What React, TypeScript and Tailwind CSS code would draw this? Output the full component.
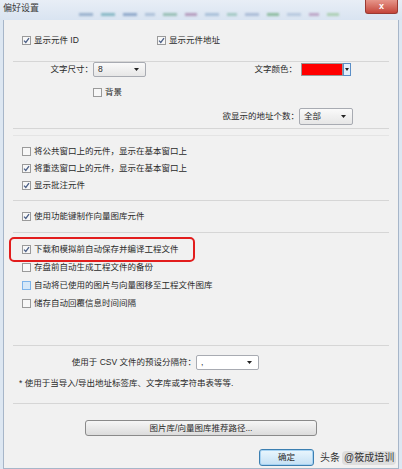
import React from 'react';

const font = "font-['Liberation_Sans','Noto_Sans_CJK_SC',sans-serif]";

// small win7 style checkbox
const Check = ({ checked = false, hot = false }: { checked?: boolean; hot?: boolean }) => (
  <span
    className={`flex h-[9px] w-[9px] shrink-0 items-center justify-center border ${
      hot ? 'border-[#7eb4ea] bg-[#d6e8f8]' : 'border-[#9a9a9a] bg-[#f7f7f7]'
    }`}
  >
    {checked && (
      <svg width="7" height="7" viewBox="0 0 7 7">
        <path d="M1 3.6 L2.8 5.4 L6 1.2" fill="none" stroke="#4b5f86" strokeWidth="1.3" />
      </svg>
    )}
  </span>
);

const CheckRow = ({ label, checked, hot, h }: { label: string; checked?: boolean; hot?: boolean; h: string }) => (
  <div className={`flex ${h} items-center gap-[3px] pl-[18px]`}>
    <Check checked={checked} hot={hot} />
    <span>{label}</span>
  </div>
);

const Arrow = () => (
  <svg width="5" height="3" viewBox="0 0 5 3">
    <path d="M0 0 H5 L2.5 3 Z" fill="#222" />
  </svg>
);

const Select = ({ value, w, flat }: { value: string; w: string; flat?: boolean }) => (
  <div
    className={`flex h-full ${w} items-center justify-between rounded-[2px] border border-[#a8abb2] pl-[4px] pr-[6px] ${
      flat ? 'bg-white' : 'bg-gradient-to-b from-[#fafafa] to-[#e6e6e6]'
    }`}
  >
    <span>{value}</span>
    <Arrow />
  </div>
);

const Sep = ({ mt, faint }: { mt: string; faint?: boolean }) => (
  <div className={`${mt} mx-[9px] h-px ${faint ? 'bg-[#e4e4e4]' : 'bg-[#d6d6d6]'}`} />
);

export default function App() {
  return (
    <div className={`${font} flex h-[469px] w-[402px] flex-col overflow-hidden bg-[#dde7f2] text-[8.5px] leading-none text-[#2a2a2a]`}>
      {/* title bar */}
      <div className="relative flex h-[20px] shrink-0 items-start bg-gradient-to-b from-[#e8eef6] to-[#d9e4f1]">
        <span className="pl-[3px] pt-[4px] text-[9px] text-[#3a3a3a]">偏好设置</span>
        <div className="ml-[40px] mt-[13px] flex gap-[8px] opacity-60 blur-[1px]">
          <span className="h-[3px] w-[14px] bg-[#6d8fb5]" />
          <span className="h-[3px] w-[14px] bg-[#4f9aa8]" />
          <span className="h-[3px] w-[14px] bg-[#5b7fb0]" />
          <span className="h-[3px] w-[10px] bg-[#8fa9c9]" />
          <span className="h-[3px] w-[14px] bg-[#6aa58c]" />
          <span className="h-[3px] w-[12px] bg-[#9a6a9a]" />
          <span className="h-[3px] w-[14px] bg-[#87a7c8]" />
          <span className="h-[3px] w-[10px] bg-[#7db5a5]" />
          <span className="h-[3px] w-[14px] bg-[#8aa0c5]" />
          <span className="h-[3px] w-[12px] bg-[#5aa06a]" />
          <span className="h-[3px] w-[14px] bg-[#9fb5d2]" />
          <span className="h-[3px] w-[10px] bg-[#a87aaa]" />
          <span className="h-[3px] w-[12px] bg-[#8cc08a]" />
        </div>
        <div className="absolute right-[4px] top-0 flex h-[14px] w-[33px] items-center justify-center rounded-b-[3px] border border-t-0 border-[#9a3a32] bg-gradient-to-b from-[#e6958a] to-[#c4443a]">
          <span className="text-[9px] font-bold text-white">x</span>
        </div>
      </div>

      {/* window body */}
      <div className="mx-[3px] flex flex-1 flex-col border-x border-b border-[#a7b6c9] bg-[#f1f1f1]">
        <div className="flex h-[41px] items-center pl-[18px]">
          <div className="flex w-[135px] items-center gap-[3px]">
            <Check checked />
            <span>显示元件 ID</span>
          </div>
          <div className="flex items-center gap-[3px]">
            <Check checked />
            <span>显示元件地址</span>
          </div>
        </div>
        <Sep mt="mt-0" />

        <div className="flex h-[15px] items-center">
          <span className="w-[89px] text-right">文字尺寸：</span>
          <Select value="8" w="w-[53px]" />
          <span className="ml-auto">文字颜色：</span>
          <div className="ml-[4px] flex h-[13px] items-center">
            <div className="h-full w-[42px] border border-[#9a9a9a] bg-[#ff0000]" />
            <div className="flex h-full w-[8px] items-center justify-center border border-[#5b8fc7] bg-[#e3eefa]">
              <svg width="4" height="3" viewBox="0 0 4 3">
                <path d="M0 0 H4 L2 3 Z" fill="#222" />
              </svg>
            </div>
          </div>
          <div className="w-[47px]" />
        </div>
        <div className="mt-[8px] flex h-[14px] items-center gap-[3px] pl-[89px]">
          <Check />
          <span>背景</span>
        </div>
        <div className="mt-[9px] flex h-[17px] items-center justify-end pr-[45px]">
          <span>欲显示的地址个数：</span>
          <Select value="全部" w="w-[54px]" />
        </div>
        <Sep mt="mt-[3px]" />

        <div className="flex flex-1 flex-col">
          <Sep mt="mt-[6px]" faint />
          <div className="mt-[7px]" />
          <CheckRow h="h-[17px]" label="将公共窗口上的元件，显示在基本窗口上" />
          <CheckRow h="h-[17px]" label="将重迭窗口上的元件，显示在基本窗口上" checked />
          <CheckRow h="h-[17px]" label="显示批注元件" checked />
          <Sep mt="mt-[6px]" />
          <div className="mt-[7px]" />
          <CheckRow h="h-[17px]" label="使用功能键制作向量图库元件" checked />
          <Sep mt="mt-[7px]" />
          <div className="relative mt-[7px]">
            <CheckRow h="h-[18px]" label="下载和模拟前自动保存并编译工程文件" checked />
            <div className="absolute left-[5px] top-[-3px] h-[25px] w-[186px] rounded-[5px] border-2 border-[#e21d1d]" />
          </div>
          <CheckRow h="h-[18px]" label="存盘前自动生成工程文件的备份" />
          <CheckRow h="h-[18px]" label="自动将已使用的图片与向量图移至工程文件图库" hot />
          <CheckRow h="h-[18px]" label="储存自动回覆信息时间间隔" />
          <Sep mt="mt-[33px]" />

          <div className="mt-[9px] flex h-[15px] items-center">
            <span className="w-[192px] text-right">使用于 CSV 文件的预设分隔符：</span>
            <Select value="," w="w-[63px]" flat />
          </div>
          <div className="mt-[5px] flex h-[16px] items-center pl-[15px]">
            * 使用于当导入/导出地址标签库、文字库或字符串表等等.
          </div>
          <Sep mt="mt-[12px]" />

          <div className="mt-[16px] pl-[81px]">
            <div className="flex h-[16px] w-[232px] items-center justify-center rounded-[3px] border border-[#8a8a8a] bg-gradient-to-b from-[#f6f6f6] to-[#dcdcdc]">
              图片库/向量图库推荐路径...
            </div>
          </div>
          <div className="relative mt-[13px] pl-[255px]">
            <div className="flex h-[17px] w-[55px] items-center justify-center rounded-[3px] border border-[#3c7fb1] bg-gradient-to-b from-[#eaf6fd] to-[#c4e0f4] shadow-[inset_0_0_0_1px_#a6d2f2]">
              确定
            </div>
            <div className="absolute left-[316px] top-0 flex h-[17px] items-center gap-[2px] whitespace-nowrap text-[10px] text-[#333]">
              <span>头条</span>
              <span className="rounded-[4px] bg-[#d9d9d9]/80 px-[2px] py-[2px]">@筱成培训</span>
            </div>
          </div>
        </div>
      </div>
    </div>
  );
}
